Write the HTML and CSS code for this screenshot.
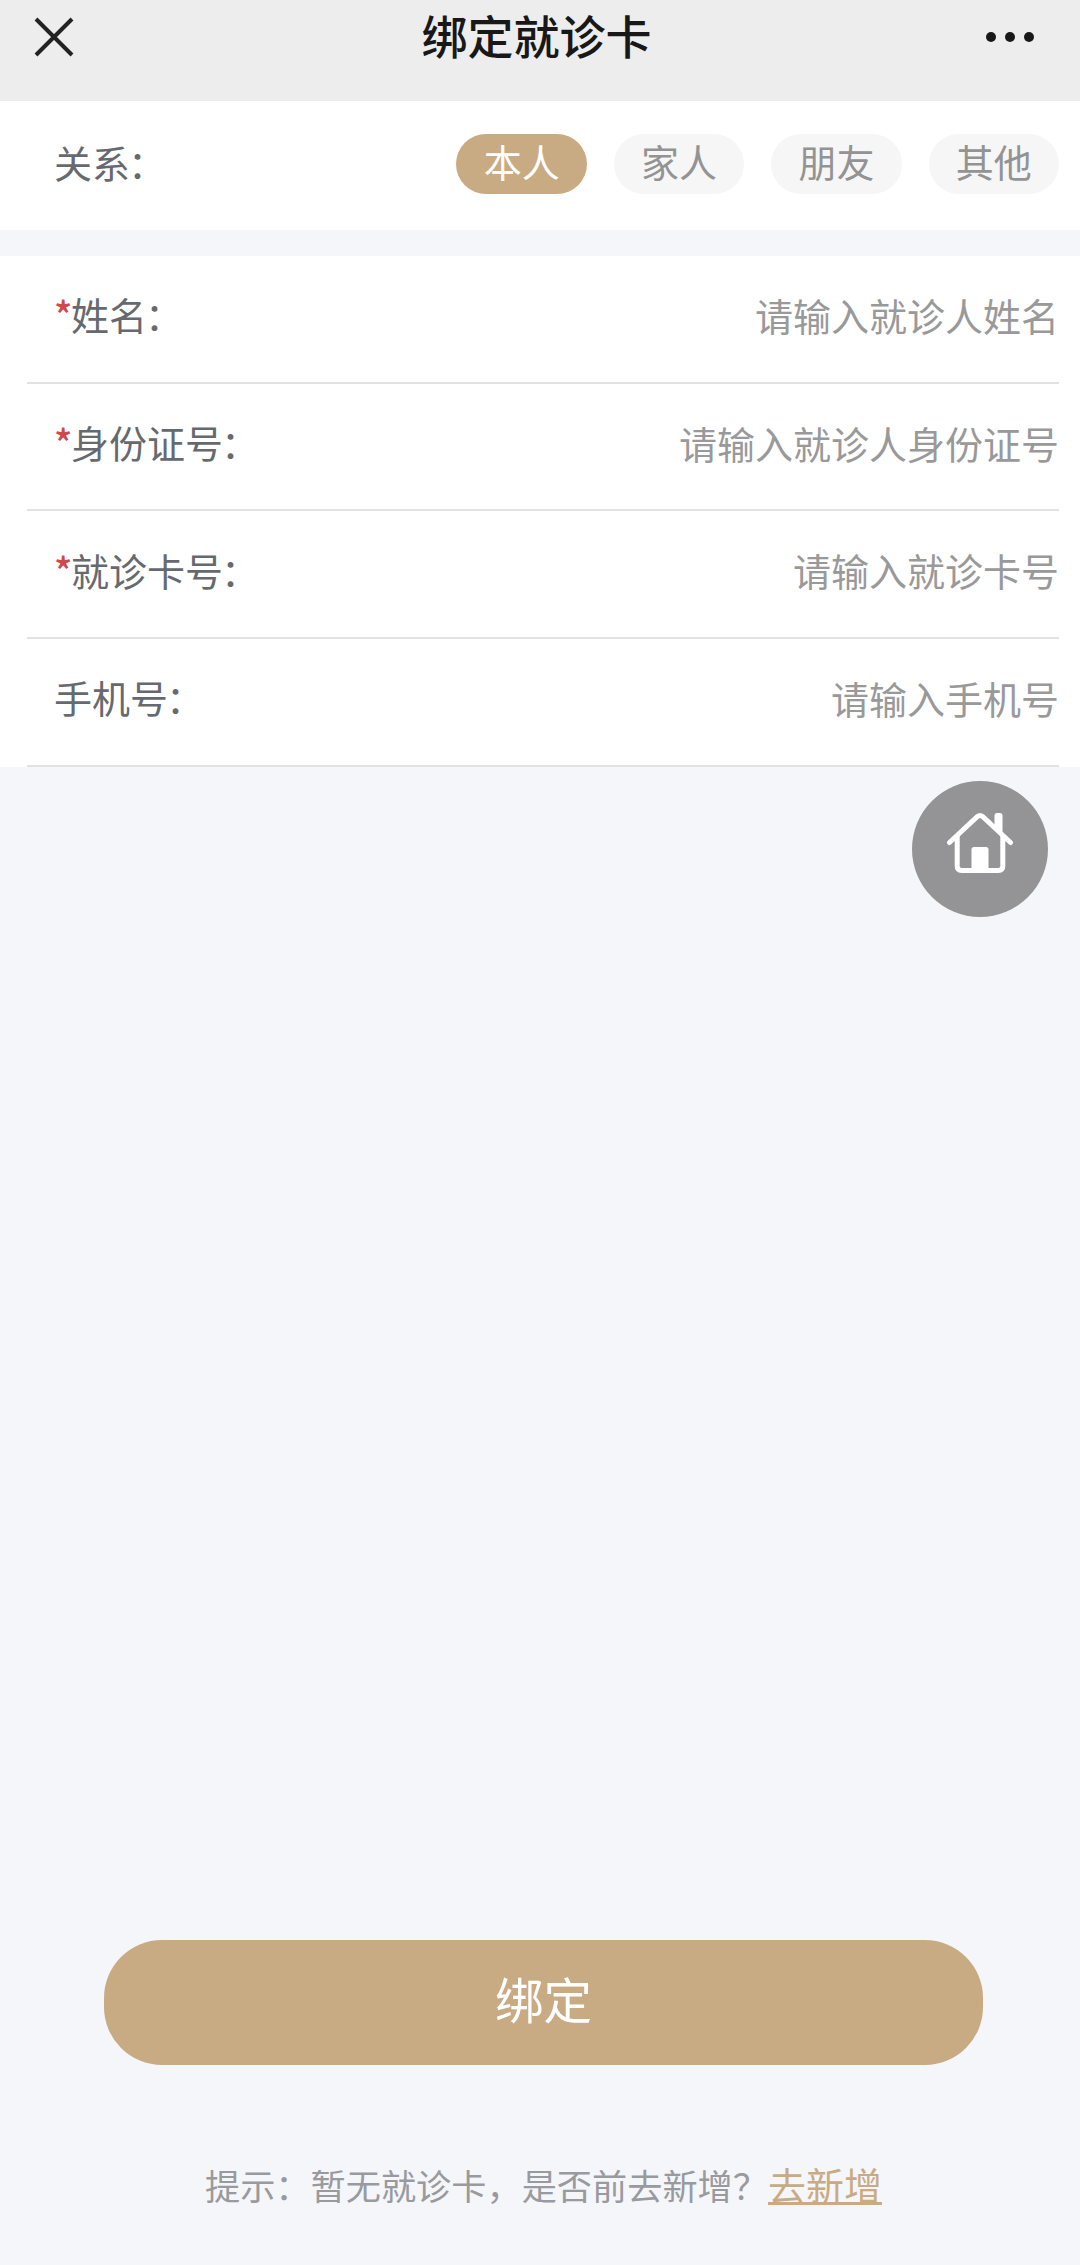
FILE: index.html
```html
<!DOCTYPE html>
<html lang="zh-CN">
<head>
    <meta charset="UTF-8">
    <meta name="viewport" content="width=device-width, initial-scale=1.0">
    <title>绑定就诊卡</title>
    <link rel="stylesheet" href="styles.css">
</head>
<body>
    <header class="topbar">
        <svg class="close" viewBox="0 0 40 40">
            <path d="M2 2L38 38M38 2L2 38"/>
        </svg>
        <h1>绑定就诊卡</h1>
        <svg class="more" viewBox="0 0 50 12">
            <circle cx="6" cy="6" r="5"/>
            <circle cx="25" cy="6" r="5"/>
            <circle cx="44" cy="6" r="5"/>
        </svg>
    </header>

    <form>
        <div class="relacao">
            <span class="label">关系<span class="colon">：</span></span>
            <div class="tags">
                <span class="tag active">本人</span>
                <span class="tag">家人</span>
                <span class="tag">朋友</span>
                <span class="tag">其他</span>
            </div>
        </div>

        <div class="campos">
            <div class="campo">
                <label class="label" for="nome"><span class="star">*</span>姓名<span class="colon">：</span></label>
                <input id="nome" type="text" placeholder="请输入就诊人姓名">
            </div>
            <div class="campo">
                <label class="label" for="idcard"><span class="star">*</span>身份证号<span class="colon">：</span></label>
                <input id="idcard" type="text" placeholder="请输入就诊人身份证号">
            </div>
            <div class="campo">
                <label class="label" for="card"><span class="star">*</span>就诊卡号<span class="colon">：</span></label>
                <input id="card" type="text" placeholder="请输入就诊卡号">
            </div>
            <div class="campo">
                <label class="label" for="phone">手机号<span class="colon">：</span></label>
                <input id="phone" type="text" placeholder="请输入手机号">
            </div>
        </div>

        <div class="bottom">
            <button type="button">绑定</button>
            <p class="hint">提示：暂无就诊卡，是否前去新增？<a href="#">去新增</a></p>
        </div>
    </form>

    <a class="home" href="#">
        <svg viewBox="0 0 68 62">
            <path class="chimney" d="M48.5 3.5Q48.5 1 51 1H54Q56.500 1 56.500 3.500V24L48.500 17Z"/>
            <path class="line" d="M3.500 30.500L31.500 4.500Q34 2.500 36.500 4.500L64.500 30.500"/>
            <path class="line" d="M11.200 25V54Q11.200 58.500 15.700 58.500H52.300Q56.800 58.500 56.800 54V25"/>
            <path class="door" d="M25.500 59V37.500Q25.500 35 28 35H40Q42.500 35 42.500 37.500V59Z"/>
        </svg>
    </a>
</body>
</html>
```
FILE: styles.css
```css
* {
    box-sizing: border-box;
}

body {
    margin: 0;
    min-height: 2265px;
    display: flex;
    flex-direction: column;
    background-color: #f5f6fa;
    font-family: "Noto Sans CJK SC", sans-serif;
    font-size: 38px;
    color: #666a6e;
}

.topbar {
    height: 101px;
    padding: 0 45px 27px 34px;
    display: flex;
    justify-content: space-between;
    align-items: center;
    background-color: #ededed;
}

.close {
    width: 40px;
    height: 40px;
    fill: none;
    stroke: #222;
    stroke-width: 4;
}

.more {
    width: 50px;
    height: 12px;
    fill: #181818;
}

h1 {
    margin: 0 0 0 14px;
    padding-bottom: 6px;
    font-size: 46px;
    font-weight: 500;
    line-height: 60px;
    color: #181818;
}

form {
    flex: 1;
    display: flex;
    flex-direction: column;
}

.relacao {
    height: 129px;
    padding: 0 21px 3px 54px;
    display: flex;
    justify-content: space-between;
    align-items: center;
    background-color: white;
}

.label {
    padding-bottom: 5px;
    line-height: 60px;
    white-space: nowrap;
}

.colon {
    margin-left: -2px;
}

.tags {
    display: flex;
    gap: 27px;
}

.tag {
    height: 60px;
    padding: 0 27.200px;
    line-height: 53px;
    border-radius: 30px;
    background-color: #f6f6f6;
    color: #939393;
}

.tag.active {
    background-color: #c9ab83;
    color: white;
}

.campos {
    margin-top: 26px;
    padding: 0 21px 0 27px;
    background-color: white;
}

.campo {
    height: 127.700px;
    padding: 0 0 4px 27px;
    display: flex;
    align-items: center;
    border-bottom: 2px solid #e2e2e2;
}

.star {
    display: inline-block;
    width: 17px;
    font-weight: 500;
    color: #d0484c;
}

input {
    flex: 1;
    min-width: 0;
    height: 60px;
    padding: 0 0 5px;
    border: none;
    outline: none;
    background: none;
    text-align: right;
    font-family: inherit;
    font-size: 38px;
    color: #666a6e;
}

input::placeholder {
    color: #999;
}

.bottom {
    margin-top: auto;
    padding: 0 97px 50px 104px;
    text-align: center;
}

button {
    display: block;
    width: 100%;
    height: 125px;
    padding: 0 0 10px;
    border: none;
    border-radius: 58px;
    background-color: #c9ab83;
    color: white;
    font-family: inherit;
    font-size: 48.500px;
    cursor: pointer;
}

.hint {
    margin: 89px 0 0;
    font-size: 35.200px;
    line-height: 60px;
    color: #999a9e;
    white-space: nowrap;
}

.hint a {
    font-size: 38px;
    color: #c9ab83;
    text-decoration-thickness: 3px;
    text-decoration-skip-ink: none;
}

.home {
    position: absolute;
    top: 781px;
    right: 32px;
    width: 136px;
    height: 136px;
    display: flex;
    justify-content: center;
    padding-top: 31px;
    border-radius: 50%;
    background-color: #949496;
}

.home svg {
    width: 68px;
    height: 62px;
    fill: white;
}

.home .line {
    fill: none;
    stroke: white;
    stroke-width: 5;
    stroke-linecap: round;
}
```
